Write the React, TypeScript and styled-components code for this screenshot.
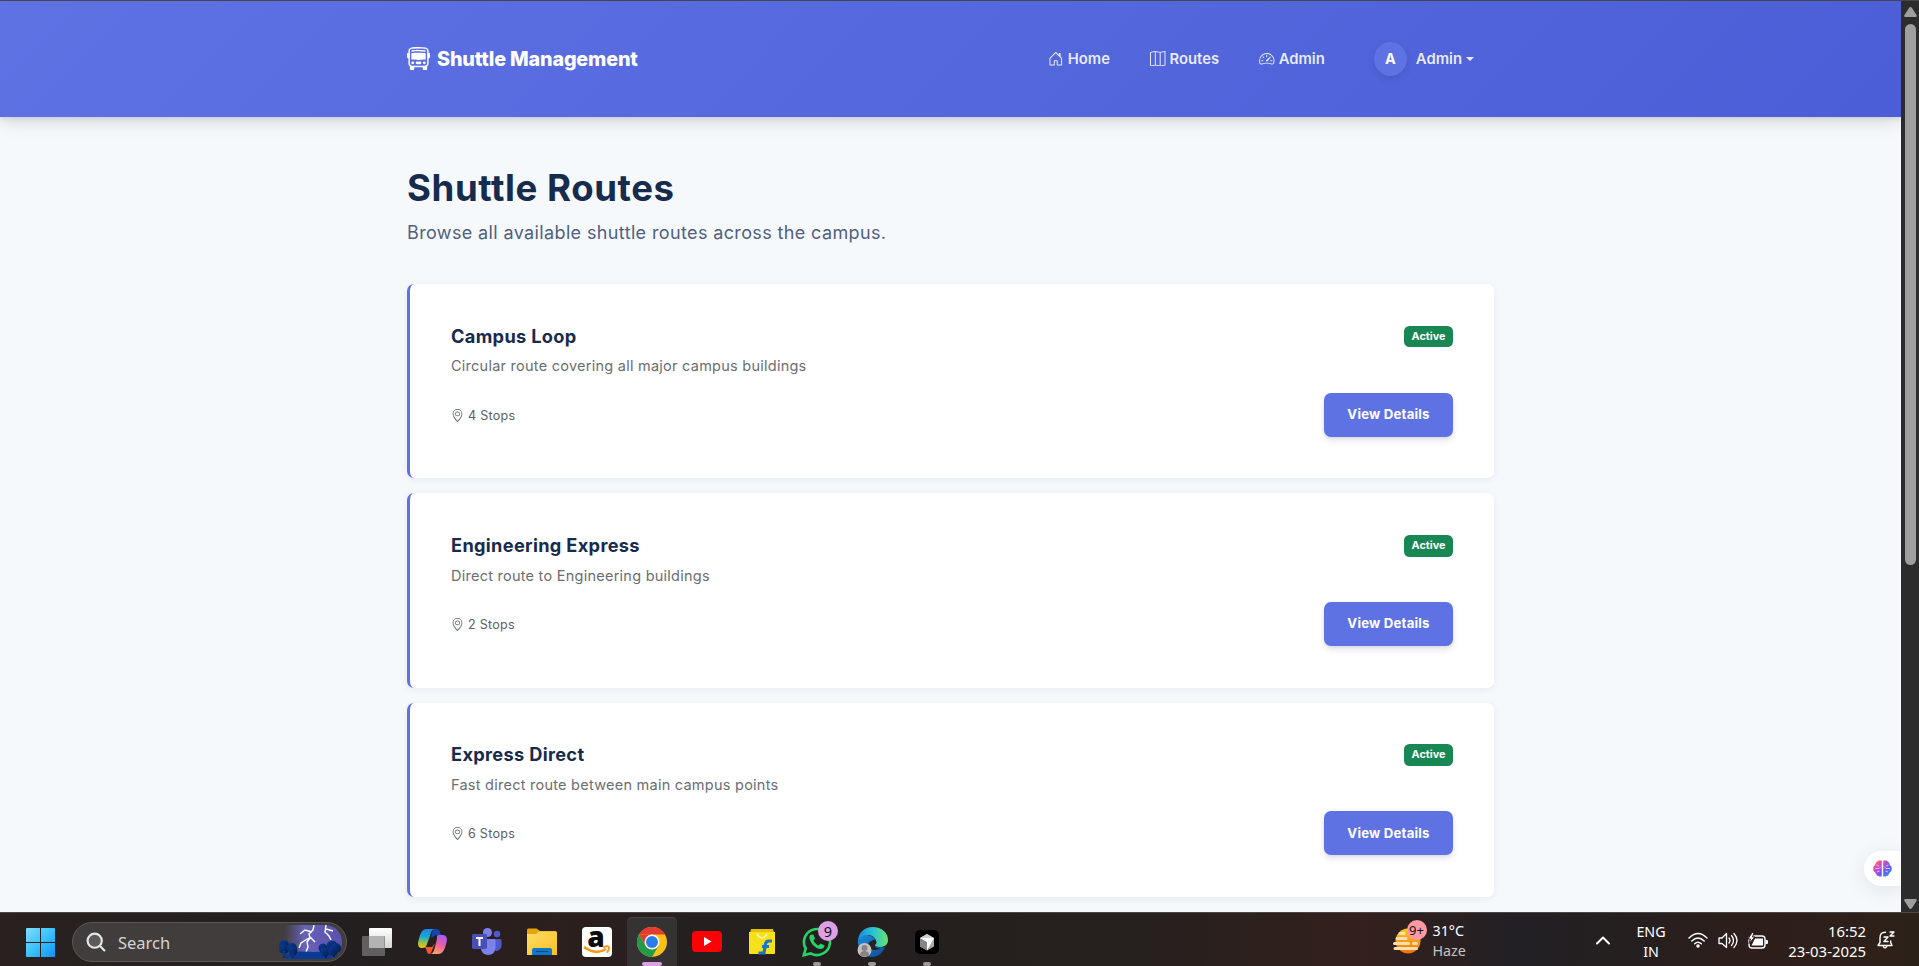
import React from "react";
import styled, { createGlobalStyle, css } from "styled-components";
import { BsBusFront, BsHouseDoor, BsMap, BsSpeedometer2, BsGeoAlt } from "react-icons/bs";

const GlobalStyle = createGlobalStyle`
  *, *::before, *::after { box-sizing: border-box; }
  body { margin: 0; background: #f5f9fc; font-family: Inter, "Liberation Sans", sans-serif; overflow: hidden; }
  h1, h2, p { margin: 0; }
  button { font-family: inherit; border: 0; cursor: pointer; }
`;

const Screen = styled.div`
  width: 1919px;
  height: 966px;
  display: flex;
  flex-direction: column;
  overflow: hidden;
  border-top: 1px solid #454649;
`;

const Viewport = styled.div`
  position: relative;
  height: 911px;
  display: flex;
  flex: none;
`;

const Page = styled.div`
  width: 1901px;
  height: 911px;
  overflow: hidden;
  background: #f5f9fc;
`;

const Navbar = styled.header`
  height: 116px;
  background: linear-gradient(135deg, #5e72e4 0%, #4b5ed7 100%);
  box-shadow: 0 4px 18px rgba(0, 0, 0, 0.13), 0 2px 5px rgba(0, 0, 0, 0.09);
`;

const Container = styled.div`
  width: 1087px;
  margin: 0 auto;
`;

const NavInner = styled(Container)`
  height: 100%;
  padding-bottom: 1px;
  display: flex;
  align-items: center;
  justify-content: space-between;
`;

const Brand = styled.a`
  display: flex;
  align-items: center;
  gap: 7px;
  color: #fff;
  font-size: 19.8px;
  font-weight: 850;
  letter-spacing: -0.17px;
  svg { width: 23px; height: 23px; }
`;

const NavLinks = styled.nav`
  display: flex;
  align-items: center;
  padding-right: 20px;
`;

const NavLink = styled.a<{ $gap?: number }>`
  display: flex;
  align-items: center;
  gap: 4px;
  margin-right: ${(p) => p.$gap ?? 40}px;
  color: rgba(255, 255, 255, 0.88);
  font-size: 14.85px;
  font-weight: 600;
  svg { width: 15.500px; height: 15.500px; }
`;

const UserMenu = styled(NavLink)`
  gap: 9px;
`;

const Avatar = styled.span`
  width: 33px;
  height: 34px;
  border-radius: 50%;
  display: flex;
  align-items: center;
  justify-content: center;
  background: #5e72e4;
  color: #fff;
  font-size: 14.4px;
  font-weight: 700;
  box-shadow: 0 3px 6px rgba(50, 50, 93, 0.18);
`;

const Caret = styled.span`
  margin-left: -5px;
  border: 4px solid transparent;
  border-top-color: rgba(255, 255, 255, 0.9);
  border-bottom: 0;
`;

const Title = styled.h1`
  margin-top: 48px;
  color: #172b4d;
  font-size: 36.6px;
  line-height: 46px;
  font-weight: 700;
  letter-spacing: 0.58px;
`;

const Lead = styled.p`
  margin-top: 7px;
  margin-bottom: 36px;
  color: #525f7f;
  font-size: 18px;
  line-height: 30px;
  letter-spacing: 0.37px;
`;

const RouteList = styled.div`
  display: flex;
  flex-direction: column;
  gap: 15.1px;
`;

const RouteCard = styled.article`
  height: 194.3px;
  flex: none;
  padding: 41.6px 41px 0;
  border-left: 3px solid #5e72e4;
  border-radius: 7px;
  background: #fff;
  box-shadow: 0 2px 7px rgba(50, 50, 93, 0.07);
`;

const CardRow = styled.div`
  display: flex;
  justify-content: space-between;
  align-items: flex-start;
`;

const RouteName = styled.h2`
  color: #172b4d;
  font-size: 18.2px;
  line-height: 20px;
  font-weight: 700;
  letter-spacing: 0.33px;
`;

const ActiveBadge = styled.span`
  height: 21.6px;
  width: 49px;
  border-radius: 5.5px;
  background: #198754;
  color: #fff;
  font-size: 10.8px;
  line-height: 21px;
  font-weight: 700;
  text-align: center;
`;

const Description = styled.p`
  margin-top: 8px;
  color: #6a6e73;
  font-size: 14.5px;
  line-height: 22px;
  letter-spacing: 0.25px;
`;

const CardFooter = styled(CardRow)`
  margin-top: 15.4px;
  align-items: center;
`;

const Stops = styled.span`
  display: flex;
  align-items: center;
  gap: 4px;
  padding-top: 1px;
  color: #5c6166;
  font-size: 12.6px;
  letter-spacing: 0.24px;
  svg { width: 13px; height: 13px; }
`;

const DetailsButton = styled.button`
  width: 129px;
  height: 44px;
  padding: 0 0 1.4px;
  border-radius: 7px;
  background: #5e72e4;
  color: #fff;
  font-size: 13.2px;
  font-weight: 700;
  letter-spacing: 0.2px;
  box-shadow: 0 4px 6px rgba(50, 50, 93, 0.11), 0 1px 3px rgba(0, 0, 0, 0.08);
`;

const AssistTab = styled.div`
  position: absolute;
  right: 18px;
  top: 850px;
  width: 37px;
  height: 35px;
  padding-left: 9px;
  display: flex;
  align-items: center;
  background: #fff;
  border-radius: 18px 0 0 18px;
  box-shadow: 0 4px 22px rgba(0, 0, 0, 0.09);
  clip-path: inset(-40px 0 -40px -40px);
`;

const Scrollbar = styled.div`
  width: 18px;
  height: 911px;
  padding: 6px 0 3px 1px;
  display: flex;
  flex-direction: column;
  align-items: center;
  background: #2c2c2c;
`;

const ScrollThumb = styled.div`
  width: 11px;
  height: 541px;
  margin: 7px 0 auto;
  border-radius: 6px;
  background: #9f9f9f;
`;

const Taskbar = styled.footer`
  height: 54px;
  display: flex;
  align-items: stretch;
  border-top: 1px solid #4b4745;
  background: linear-gradient(90deg, #28211f 0%, #231f20 18%, #2c1f1d 29%, #241f20 38%, #25201e 50%, #26201e 60%, #34201d 71%, #222024 79%, #251f1f 85%, #2e1e1a 92%, #2c2119 100%);
  font-family: "Noto Sans", "Open Sans", sans-serif;
  color: #fff;
`;

const TaskSlot = styled.div<{ $active?: boolean }>`
  position: relative;
  width: 50px;
  margin: 4px 2.5px 0;
  display: flex;
  align-items: center;
  justify-content: center;
  border-radius: 5px 5px 0 0;
  ${(p) =>
    p.$active &&
    css`
      background: #353233;
      box-shadow: inset 0 1px #454243;
    `}
`;

const StartSlot = styled(TaskSlot)`
  margin: 5px 6.5px 0 15.5px;
`;

const RunMark = styled.span<{ $wide?: boolean }>`
  position: absolute;
  bottom: 0;
  left: 50%;
  transform: translateX(-50%);
  width: ${(p) => (p.$wide ? 20 : 8)}px;
  height: 4px;
  border-radius: 3px;
  background: ${(p) => (p.$wide ? "#dd9fe6" : "#9b9897")};
`;

const CountBadge = styled.span<{ $x: number; $y: number; $pink?: boolean }>`
  position: absolute;
  left: ${(p) => p.$x}px;
  top: ${(p) => p.$y}px;
  width: 20px;
  height: 20px;
  border-radius: 50%;
  background: ${(p) => (p.$pink ? "#ff99a4" : "#dd9fe6")};
  color: #111;
  font-size: ${(p) => (p.$pink ? 13 : 14.5)}px;
  line-height: 20px;
  text-align: center;
`;

const SearchBox = styled.div`
  width: 275px;
  height: 40px;
  margin: 9px 2.5px 0 0;
  padding: 0 4px 0 13px;
  display: flex;
  align-items: center;
  border: 1px solid #5c5856;
  border-radius: 20px;
  background: #413d3c;
`;

const SearchLabel = styled.span`
  margin-left: 12px;
  margin-right: auto;
  padding-top: 1px;
  color: #d6d4d3;
  font-size: 16.5px;
`;

const Weather = styled.div`
  position: relative;
  margin-left: 438px;
  width: 200px;
  display: flex;
  align-items: center;
  gap: 11px;
`;

const StackedText = styled.div<{ $align?: string; $width?: number }>`
  width: ${(p) => (p.$width ? p.$width + "px" : "auto")};
  text-align: ${(p) => p.$align ?? "left"};
  font-size: ${(p) => (p.$align === "right" ? 14.9 : 14.3)}px;
  line-height: 20px;
  white-space: nowrap;
  padding-top: ${(p) => (p.$align === "right" ? 1 : 3)}px;
`;

const Muted = styled.div`
  color: #c9c5c4;
`;

const Tray = styled.div`
  margin-left: auto;
  padding-right: 24px;
  display: flex;
  align-items: center;
`;

const TrayIcon = styled.span<{ $left: number }>`
  display: flex;
  margin-left: ${(p) => p.$left}px;
  padding-top: 1px;
`;

const WindowsLogo = () => (
  <svg width="29" height="29" viewBox="0 0 29 29">
    <defs>
      <linearGradient id="win" x1="0" y1="0" x2="1" y2="1">
        <stop offset="0" stopColor="#7fdcff" />
        <stop offset=".5" stopColor="#3cc2fb" />
        <stop offset="1" stopColor="#0d93f6" />
      </linearGradient>
    </defs>
    <path fill="url(#win)" d="M1 0h13v14H0V1a1 1 0 0 1 1-1zM15 0h13a1 1 0 0 1 1 1v13H15zM0 15h14v14H1a1 1 0 0 1-1-1zM15 15h14v13a1 1 0 0 1-1 1H15z" />
  </svg>
);

const SearchGlass = () => (
  <svg width="20" height="20" viewBox="0 0 20 20" fill="#5d5a59" stroke="#e4e7ea" strokeWidth="2.1" strokeLinecap="round">
    <circle cx="8.7" cy="8.7" r="7.1" />
    <path d="M13.8 13.8 18.4 18.4" />
  </svg>
);

const StormArt = () => (
  <svg width="63" height="34" viewBox="0 0 63 34">
    <defs>
      <linearGradient id="sky" x1="0" x2="1" y1="0" y2="0">
        <stop offset="0" stopColor="#5b57a5" stopOpacity="0" />
        <stop offset=".35" stopColor="#6763b9" />
        <stop offset="1" stopColor="#5a50ad" />
      </linearGradient>
      <linearGradient id="tree" x1="0" x2="1" y1="0" y2="1">
        <stop offset="0" stopColor="#0b3f9c" />
        <stop offset="1" stopColor="#061943" />
      </linearGradient>
    </defs>
    <path fill="url(#sky)" d="M5 0h40c12 0 18 8 18 17 0 7-5 14-12 16H9C4 27 4 8 5 0z" />
    <path d="M35 0 34 5 30 9 31 13 28 17 29 22 27 27M33 7 26 5 21 9M30 13 22 18 20 23M31 12 36 17M47 0 46 7 50 11 52 15M47 4 54 6" fill="none" stroke="#fff" strokeWidth="1.4" />
    <path fill="#0a3b94" d="M5 30q12-5 30-3 16-2 24 3-5 4-13 4H11q-5 0-6-4z" />
    <g fill="url(#tree)">
      <circle cx="5" cy="20" r="5" /><circle cx="5" cy="24" r="5" /><circle cx="13" cy="23" r="5" /><circle cx="14" cy="26" r="4.5" />
      <circle cx="44" cy="23" r="4.5" /><circle cx="46" cy="27" r="4.5" /><circle cx="53" cy="21" r="5.5" /><circle cx="57" cy="23" r="5" /><circle cx="54" cy="26" r="5" />
      <path d="M4 26h2v7H4zM13 28h2v5h-2zM46 28h2v5h-2zM54 28h2v4h-2z" />
    </g>
  </svg>
);

const TaskViewIcon = () => (
  <svg width="30" height="28" viewBox="0 0 30 28">
    <defs><linearGradient id="tv" x1="0" y1="0" x2="0" y2="1"><stop stopColor="#fff" /><stop offset="1" stopColor="#d6d6d6" /></linearGradient></defs>
    <rect x="7" width="23" height="20" rx="1" fill="url(#tv)" />
    <rect y="8" width="23" height="20" rx="1" fill="#676767" fillOpacity=".9" />
    <path d="M7 8h15.500v12H7z" fill="#b3b3b3" />
  </svg>
);

const CopilotIcon = () => (
  <svg width="29" height="27" viewBox="0 0 29 27">
    <defs>
      <linearGradient id="cp1" x1=".3" y1="0" x2=".2" y2="1"><stop stopColor="#1a88e8" /><stop offset=".4" stopColor="#18a9d6" /><stop offset=".7" stopColor="#8cc44a" /><stop offset="1" stopColor="#ffc20e" /></linearGradient>
      <linearGradient id="cp2" x1=".7" y1="0" x2=".3" y2="1"><stop stopColor="#a45cf0" /><stop offset=".5" stopColor="#ee5fa3" /><stop offset="1" stopColor="#ffa45c" /></linearGradient>
    </defs>
    <path fill="#1443b0" d="M15 1h4c2 0 3 2 4 6h-5l-5 3z" />
    <path fill="url(#cp1)" d="M8 1h9c-3 0-4 3-5 7l-3 8c-1 3-2 4-5 4-3 0-4-2-4-5C1 10 3 1 8 1z" />
    <path fill="#f4582f" d="M7 19h7l3-4-4 10-2 1c-2 0-2-4-4-7z" />
    <path fill="url(#cp2)" d="M20 7h4c3 0 5 1 5 5-1 5-3 14-8 14h-9c3 0 4-3 5-7l2-8c0-2 0-4 1-4z" />
  </svg>
);

const TeamsIcon = () => (
  <svg width="30" height="27" viewBox="0 0 30 27">
    <circle cx="25" cy="6" r="3.300" fill="#5059c9" />
    <path fill="#5059c9" d="M20 11h8q1.500 0 1.500 1.500V17c0 4-3 6-6 6z" />
    <circle cx="15.500" cy="4.500" r="4.500" fill="#7b83eb" />
    <path fill="#7b83eb" d="M10 11h12q1.500 0 1.500 1.500V19c0 5-3 8-7.500 8-4 0-7-3-7-7z" />
    <rect y="6" width="15" height="15" rx="1.400" fill="#484fb9" />
    <path stroke="#fff" strokeWidth="2" d="M4 10h7M7.500 10v8" />
  </svg>
);

const FolderIcon = () => (
  <svg width="30" height="27" viewBox="0 0 30 27">
    <defs><linearGradient id="fo" x1="0" y1="0" x2="1" y2="1"><stop stopColor="#ffdd67" /><stop offset="1" stopColor="#fbbf21" /></linearGradient></defs>
    <path fill="#e5a50e" d="M0 2q0-1.500 1.500-1.500h8L13 3h15q2 0 2 2v5H0z" />
    <path fill="url(#fo)" d="M0 6h9l3-2.500h16.500Q30 3.500 30 5v22H0z" />
    <path fill="#0f78cb" d="M5 27v-5q0-2 2-2h16q2 0 2 2v5z" />
    <path stroke="#0b4c8c" d="M9 23.500h12" />
  </svg>
);

const AmazonTile = styled.div`
  width: 30px;
  height: 30px;
  position: relative;
  display: flex;
  justify-content: center;
  border-radius: 4px;
  background: #fff;
  color: #0a0a0a;
  font: 800 28px/18px "Open Sans", sans-serif;
  padding-right: 2px;
  svg { position: absolute; left: 1px; top: 18px; }
`;

const AmazonIcon = () => (
  <AmazonTile>
    a
    <svg width="28" height="11" viewBox="0 0 28 11" fill="none" stroke="#f79a13" strokeWidth="2.600">
      <path d="M1 2q12 8.500 22 2" /><path d="M20 2.200q6-2 6 .5 0 2-2 5" strokeWidth="2" />
    </svg>
  </AmazonTile>
);

const ChromeIcon = () => (
  <svg width="30" height="30" viewBox="0 0 30 30">
    <circle cx="15" cy="15" r="15" fill="#fbc116" />
    <path fill="#e33b2e" d="M2 7.500A15 15 0 0 1 28 7.500H15z" />
    <path fill="#e33b2e" d="M2 7.500 8.500 18.800 15 7.500z" />
    <path fill="#259b48" d="M2 7.500A15 15 0 0 0 15 30l6.500-11.200-13 0z" />
    <circle cx="15" cy="15" r="7.500" fill="#fff" />
    <circle cx="15" cy="15" r="6" fill="#2b7de9" />
  </svg>
);

const YoutubeIcon = () => (
  <svg width="30" height="21" viewBox="0 0 30 21">
    <rect width="30" height="21" rx="4" fill="#fb0207" /><path fill="#fff" d="m12 6 7.500 4.500L12 15z" />
  </svg>
);

const FlipkartIcon = () => (
  <svg width="26" height="26" viewBox="0 0 26 26">
    <path fill="#e5bd0b" d="M2 0h22l1 4H1z" /><path fill="#f8e01b" d="M0 3h26v21q0 1-1 1H1q-1 0-1-1z" />
    <path d="M8 5q5 8 10 0" fill="none" stroke="#fff7a7" strokeWidth="1.600" />
    <path d="M23 12h-3q-3 0-3.500 3L15 24H9.500M13 17.500h7" fill="none" stroke="#1976c9" strokeWidth="3.200" />
  </svg>
);

const WhatsappIcon = () => (
  <svg width="30" height="30" viewBox="0 0 30 30">
    <path fill="none" stroke="#25d366" strokeWidth="2.600" d="M1.800 28.200 3.700 21.500A13 13 0 1 1 8.700 26.400z" />
    <path fill="#25d366" d="M10 7.500c-2 0-3 2-2.500 4 1 5 5.500 9.500 10.500 10.500 2 .5 4.500-1 4.500-3.500L18.500 16.500l-2 2c-2-.8-4-2.700-5-5l1.500-1.700-1.500-4z" />
  </svg>
);

const EdgeIcon = () => (
  <svg width="31" height="30" viewBox="0 0 31 30">
    <defs>
      <linearGradient id="ed1" x1="0" x2="1"><stop stopColor="#168ddd" /><stop offset=".5" stopColor="#2bc3d2" /><stop offset="1" stopColor="#6be36b" /></linearGradient>
      <linearGradient id="ed2" x1="0" y1="0" x2="1" y2="1"><stop stopColor="#1a8fe0" /><stop offset="1" stopColor="#0b4a92" /></linearGradient>
    </defs>
    <path fill="url(#ed2)" d="M1 13c2-5 8-6 13-4 3 1 5 4 4 6-3 4 2 6 10 5-2 6-7 10-13 10C7 30 0 23 1 13z" />
    <path fill="url(#ed1)" d="M1 13C2 5 8 0 15.500 0 25 0 31 6 31 13c0 5-4 7-8 7-3 0-6-1-5-3 3-3-1-9-7-9-4 0-8 2-10 5z" />
    <path fill="#27211f" d="M18 12.500q3 3 0 5.500-.8 3 5 3.500-8 4-12-2-1-5 7-7z" />
    <circle cx="7.500" cy="23" r="7" fill="#c5c3c1" />
    <circle cx="7.500" cy="21" r="3" fill="#898481" /><path fill="#898481" d="M3 28q0-4 4.500-4t4.500 4q-4 3-9 0z" />
  </svg>
);

const CursorIcon = () => (
  <svg width="24" height="24" viewBox="0 0 24 24">
    <rect width="24" height="24" rx="5" fill="#000" />
    <path fill="#aaa" d="M12 4 19 8v8.500L12 20.500l-7-4V8z" />
    <path fill="#cfcfcf" d="M12 4 19 8H5z" /><path fill="#858585" d="M5 8l7 4v8.500l-7-4z" />
    <path fill="#fff" d="M5 8h14L12 20.500V12z" />
  </svg>
);

const HazeIcon = () => (
  <svg width="29" height="30" viewBox="0 0 29 30">
    <defs><linearGradient id="hz" x1="0" y1="0" x2="0" y2="1"><stop stopColor="#ffc928" /><stop offset="1" stopColor="#ef7109" /></linearGradient></defs>
    <circle cx="15" cy="16" r="12.500" fill="url(#hz)" />
    <path stroke="#f8dfae" strokeWidth="3" strokeLinecap="round" d="M7 8.500h4M4 13.500h9M1.500 18.500h14M20.500 18.500h3M2 23.500h21.500" />
  </svg>
);

const BrainIcon = () => (
  <svg width="19" height="17" viewBox="0 0 19 17">
    <defs><linearGradient id="br" x1="0" y1="0" x2="1" y2="1"><stop stopColor="#ff8a34" /><stop offset=".25" stopColor="#ee4aa8" /><stop offset=".6" stopColor="#7557f4" /><stop offset="1" stopColor="#159cf4" /></linearGradient></defs>
    <path fill="url(#br)" d="M8.800.5v16H6.500L4 15.500 2.500 13 .3 10.500V7L2 5 3 2.500 5.500.5zM10.200.5v16h2.300l2.500-1 1.500-2.500 2.200-2.500V7L17 5l-1-2.500L13.500.5z" />
    <path stroke="#f3cbff" strokeWidth=".9" fill="none" d="M2 8.500h4l2-2M3.500 5l2.500 1M4 12l2.500-1M17 8.500h-4l-2-2M15.500 5 13 6M15 12l-2.500-1" />
  </svg>
);

const line = { fill: "none", stroke: "#fff", strokeWidth: 1.5, strokeLinecap: "round", strokeLinejoin: "round" } as const;

const ChevronIcon = () => (
  <svg width="14" height="9" viewBox="0 0 14 9" {...line} strokeWidth={2}><path d="m1 7.500 6-6 6 6" /></svg>
);
const WifiIcon = () => (
  <svg width="20" height="16" viewBox="0 0 20 16" {...line}>
    <path d="M1 6q9-9 18 0M3.800 9q6.200-6 12.400 0M6.700 11.700q3.300-3 6.600 0" /><circle cx="10" cy="14" r="1" fill="#fff" />
  </svg>
);
const SoundIcon = () => (
  <svg width="20" height="17" viewBox="0 0 20 17" {...line} strokeWidth={1.3}>
    <path d="M1 6h3l4.500-4.500v14L4 11.500H1zM11 6q2 2.500 0 5M13.500 3.500q4 5 0 10M16 1.500q6 7 0 14" />
  </svg>
);
const BatteryIcon = () => (
  <svg width="20" height="17" viewBox="0 0 20 17">
    <rect x="1" y="4" width="16" height="12" rx="3" {...line} strokeWidth={1.400} />
    <path fill="#fff" d="M7 6.500h8v7H3.500zM17.500 8H19q1 0 1 1v2q0 1-1 1h-1.500z" />
    <path fill="#fff" stroke="#2a1e1d" d="M4 .5 0 7h2.500L1 11.500 7 5H4.500L6 .5z" />
  </svg>
);
const BellIcon = () => (
  <svg width="18" height="18" viewBox="0 0 18 18" {...line} strokeWidth={1.400}>
    <path d="M8.500 1.200Q3 1 3 7v4.500L1 14.500h14l-1.300-3V10M6 15q2 4 4 0M7 6h4l-4 4.500h4M13 1h4l-4 4h4" />
  </svg>
);

const routes = [
  { name: "Campus Loop", description: "Circular route covering all major campus buildings", stops: 4 },
  { name: "Engineering Express", description: "Direct route to Engineering buildings", stops: 2 },
  { name: "Express Direct", description: "Fast direct route between main campus points", stops: 6 },
];

export default function App() {
  return (
    <>
      <GlobalStyle />
      <Screen>
        <Viewport>
          <Page>
            <Navbar>
              <NavInner>
                <Brand><BsBusFront /><span>Shuttle Management</span></Brand>
                <NavLinks>
                  <NavLink><BsHouseDoor /><span>Home</span></NavLink>
                  <NavLink><BsMap /><span>Routes</span></NavLink>
                  <NavLink $gap={49}><BsSpeedometer2 /><span>Admin</span></NavLink>
                  <UserMenu $gap={0}><Avatar>A</Avatar><span>Admin</span><Caret /></UserMenu>
                </NavLinks>
              </NavInner>
            </Navbar>
            <Container>
              <Title>Shuttle Routes</Title>
              <Lead>Browse all available shuttle routes across the campus.</Lead>
              <RouteList>
                {routes.map((r) => (
                  <RouteCard key={r.name}>
                    <CardRow><RouteName>{r.name}</RouteName><ActiveBadge>Active</ActiveBadge></CardRow>
                    <Description>{r.description}</Description>
                    <CardFooter>
                      <Stops><BsGeoAlt /><span>{r.stops} Stops</span></Stops>
                      <DetailsButton>View Details</DetailsButton>
                    </CardFooter>
                  </RouteCard>
                ))}
              </RouteList>
            </Container>
          </Page>
          <Scrollbar>
            <svg width="13" height="10" viewBox="0 0 13 10"><path fill="#9f9f9f" d="M6.500 0q1 0 1.500 1l4.500 7q1 2-1 2h-10q-2 0-1-2L5 1q.500-1 1.500-1z" /></svg>
            <ScrollThumb />
            <svg width="13" height="10" viewBox="0 0 13 10"><path fill="#9f9f9f" d="M6.500 10q1 0 1.500-1l4.500-7q1-2-1-2h-10q-2 0-1 2L5 9q.500 1 1.500 1z" /></svg>
          </Scrollbar>
          <AssistTab><BrainIcon /></AssistTab>
        </Viewport>
        <Taskbar>
          <StartSlot><WindowsLogo /></StartSlot>
          <SearchBox><SearchGlass /><SearchLabel>Search</SearchLabel><StormArt /></SearchBox>
          <TaskSlot><TaskViewIcon /></TaskSlot>
          <TaskSlot><CopilotIcon /></TaskSlot>
          <TaskSlot><TeamsIcon /></TaskSlot>
          <TaskSlot><FolderIcon /></TaskSlot>
          <TaskSlot><AmazonIcon /></TaskSlot>
          <TaskSlot $active><ChromeIcon /><RunMark $wide /></TaskSlot>
          <TaskSlot><YoutubeIcon /></TaskSlot>
          <TaskSlot><FlipkartIcon /></TaskSlot>
          <TaskSlot><WhatsappIcon /><CountBadge $x={26} $y={4}>9</CountBadge><RunMark /></TaskSlot>
          <TaskSlot><EdgeIcon /><RunMark /></TaskSlot>
          <TaskSlot><CursorIcon /><RunMark /></TaskSlot>
          <Weather>
            <HazeIcon /><CountBadge $x={14} $y={7} $pink>9+</CountBadge>
            <StackedText><div>31°C</div><Muted>Haze</Muted></StackedText>
          </Weather>
          <Tray>
            <TrayIcon $left={0}><ChevronIcon /></TrayIcon>
            <TrayIcon $left={24}><StackedText $align="center" $width={34}><div>ENG</div><div>IN</div></StackedText></TrayIcon>
            <TrayIcon $left={20}><WifiIcon /></TrayIcon>
            <TrayIcon $left={10}><SoundIcon /></TrayIcon>
            <TrayIcon $left={10}><BatteryIcon /></TrayIcon>
            <TrayIcon $left={16}><StackedText $align="right" $width={82}><div>16:52</div><div>23-03-2025</div></StackedText></TrayIcon>
            <TrayIcon $left={11}><BellIcon /></TrayIcon>
          </Tray>
        </Taskbar>
      </Screen>
    </>
  );
}
